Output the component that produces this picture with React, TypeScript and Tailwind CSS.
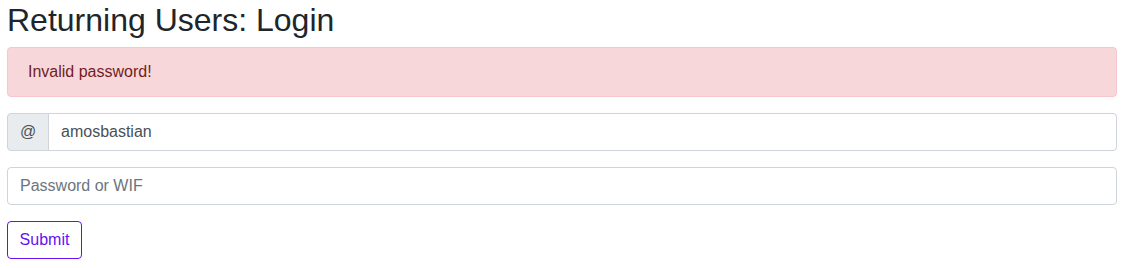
export default function App() {
  return (
    <div className="min-h-[268px] bg-white pl-[7px] font-['Liberation_Sans',Arial,sans-serif] text-[#212529]">
      <div className="w-[1110px]">
        <h2 className="pt-px text-[32px] leading-[38px] font-normal">Returning Users: Login</h2>

        <div className="mt-2 rounded border border-[#f5c6cb] bg-[#f8d7da] px-5 py-3 text-base leading-6 text-[#721c24]">
          Invalid password!
        </div>

        <form className="mt-4" onSubmit={(e) => e.preventDefault()}>
          {/* Username */}
          <div className="flex h-[38px]">
            <span className="flex w-[42px] items-center justify-center rounded-l border border-[#ced4da] bg-[#e9ecef] text-base text-[#495057]">
              @
            </span>
            <input
              type="text"
              defaultValue="amosbastian"
              className="-ml-px flex-1 rounded-r border border-[#ced4da] bg-white px-3 text-base text-[#495057] outline-none"
            />
          </div>

          {/* Password */}
          <div className="mt-4">
            <input
              type="password"
              placeholder="Password or WIF"
              className="h-[38px] w-full rounded border border-[#ced4da] bg-white px-3 text-base text-[#495057] outline-none placeholder:text-[#6c757d]"
            />
          </div>

          <button
            type="submit"
            className="mt-4 h-[38px] w-[75px] rounded border border-[#6610f2] bg-white text-base leading-6 text-[#6610f2]"
          >
            Submit
          </button>
        </form>
      </div>
    </div>
  );
}
